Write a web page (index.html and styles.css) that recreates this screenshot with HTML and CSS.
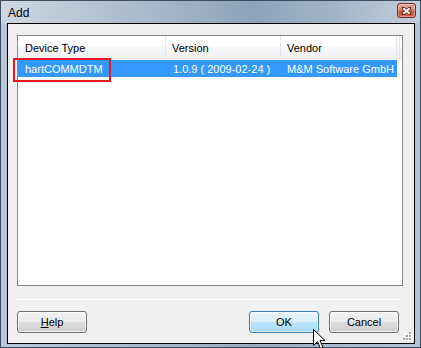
FILE: index.html
```html
<!DOCTYPE html>
<html>
<head>
<meta charset="utf-8">
<link rel="stylesheet" href="styles.css">
</head>
<body>
<div class="window">
  <div class="titlebar">
    <span class="title">Add</span>
    <span class="close">
      <svg width="9" height="8" viewBox="0 0 9 8"><path d="M1 1 L8 7 M8 1 L1 7" stroke="#5a1a10" stroke-width="3.2" stroke-linecap="square"/><path d="M1.3 1.2 L7.7 6.8 M7.7 1.2 L1.3 6.8" stroke="#fff" stroke-width="1.8"/></svg>
    </span>
  </div>
  <div class="client">
    <div class="listview">
      <div class="header">
        <div class="hcol c1">Device Type</div>
        <div class="hcol c2">Version</div>
        <div class="hcol c3">Vendor</div>
        <div class="hfill"></div>
      </div>
      <div class="row selected">
        <div class="cell c1">hartCOMMDTM</div>
        <div class="cell c2">1.0.9 ( 2009-02-24 )</div>
        <div class="cell c3">M&amp;M Software GmbH</div>
      </div>
      <div class="highlight"></div>
    </div>
    <div class="separator"></div>
    <div class="buttons">
      <button class="btn"><u>H</u>elp</button>
      <div class="spacer"></div>
      <button class="btn default">OK</button>
      <button class="btn">Cancel</button>
    </div>
    <svg class="grip" width="9" height="9" viewBox="0 0 9 9">
      <g fill="#fff"><rect x="7" y="1" width="2" height="2"/><rect x="4" y="4" width="2" height="2"/><rect x="7" y="4" width="2" height="2"/><rect x="1" y="7" width="2" height="2"/><rect x="4" y="7" width="2" height="2"/><rect x="7" y="7" width="2" height="2"/></g>
      <g fill="#a8a8a8"><rect x="6" y="0" width="2" height="2"/><rect x="3" y="3" width="2" height="2"/><rect x="6" y="3" width="2" height="2"/><rect x="0" y="6" width="2" height="2"/><rect x="3" y="6" width="2" height="2"/><rect x="6" y="6" width="2" height="2"/></g>
    </svg>
  </div>
  <svg class="cursor" width="13" height="21" viewBox="0 0 13 21">
    <path d="M0.5 0.5 L0.5 16.5 L4.5 12.5 L7.5 19.5 L10 18.5 L7 11.5 L12 11.5 Z" fill="#fff" stroke="#000" stroke-width="1" stroke-linejoin="miter"/>
  </svg>
</div>
</body>
</html>
```

FILE: styles.css
```css
* { box-sizing: border-box; }
html, body { margin: 0; padding: 0; }
body {
  width: 421px;
  height: 348px;
  overflow: hidden;
  font-family: "Liberation Sans", Arial, sans-serif;
  font-size: 11px;
  color: #000;
}
.window {
  position: relative;
  width: 421px;
  height: 348px;
  border: 1px solid #3b4d60;
  background: linear-gradient(to right, #b9c8d7 0%, #a4b6c9 40%, #98acc1 60%, #aabccd 85%, #b4c4d4 100%);
  padding: 0 5px 3px 6px;
  display: flex;
  flex-direction: column;
}
.titlebar {
  height: 22px;
  display: flex;
  align-items: center;
  justify-content: space-between;
  background: linear-gradient(to right, #cdd8e3 0%, #bccad8 15%, #a3b5c7 40%, #8ea3b9 60%, #a2b5c8 80%, #c2cfdc 100%);
  margin: 0 -5px 0 -6px;
  padding: 0 4px 0 7px;
}
.title {
  font-size: 12px;
  color: #000;
  padding-top: 1px;
}
.close {
  width: 19px;
  height: 15px;
  margin-top: -3px;
  border: 1px solid #6e2a1c;
  border-radius: 3px;
  background: linear-gradient(to bottom, #e9a99a 0%, #d98070 45%, #c5503a 55%, #cf6a4e 100%);
  display: flex;
  align-items: center;
  justify-content: center;
  box-shadow: inset 0 0 0 1px rgba(255,255,255,0.35);
}
.client {
  position: relative;
  flex: 1;
  border: 1px solid #000;
  background: #f0f0f0;
  padding: 11px 11px 9px 9px;
  display: flex;
  flex-direction: column;
}
.listview {
  position: relative;
  height: 251px;
  border: 1px solid #828790;
  background: #fff;
}
.header {
  display: flex;
  height: 23px;
  background: linear-gradient(to bottom, #ffffff 0%, #ffffff 45%, #f5f6f7 55%, #f1f2f4 100%);
  border-bottom: 1px solid #e5e5e5;
}
.hcol {
  display: flex;
  align-items: center;
  border-right: 1px solid #e3e5e8;
  padding-top: 2px;
}
.hfill {
  flex: 1;
  border-right: 1px solid #e3e5e8;
  margin-right: 2px;
  background: linear-gradient(to bottom, #ffffff, #eef0f2);
}
.c1 { width: 148px; padding-left: 7px; }
.c2 { width: 115px; padding-left: 6px; }
.c3 { width: 116px; padding-left: 6px; }
.row {
  display: flex;
  height: 17px;
  margin-top: 1px;
  width: 379px;
}
.row.selected {
  background: #3399ff;
  color: #fff;
}
.cell {
  display: flex;
  align-items: center;
  white-space: nowrap;
}
.cell.c2 { padding-left: 7px; }
.cell.c3 { padding-left: 6px; }
.highlight {
  position: absolute;
  left: -5px;
  top: 22px;
  width: 98px;
  height: 24px;
  border: 2px solid #e8191f;
}
.separator {
  margin-top: 13px;
  height: 1px;
  background: #a0a0a0;
  border-bottom: 1px solid #ffffff;
  margin-right: 1px;
}
.buttons {
  display: flex;
  margin-top: 11px;
  margin-right: 4px;
  gap: 10px;
}
.spacer { flex: 1; }
.btn {
  width: 70px;
  height: 22px;
  border: 1px solid #707070;
  border-radius: 3px;
  background: linear-gradient(to bottom, #f2f2f2 0%, #ebebeb 50%, #dddddd 50%, #cfcfcf 100%);
  box-shadow: inset 0 0 0 1px rgba(255,255,255,0.7);
  font-family: "Liberation Sans", Arial, sans-serif;
  font-size: 11px;
  color: #000;
  padding: 0;
  margin: 0;
}
.btn u { text-decoration: underline; }
.btn.default {
  border-color: #3c7fb1;
  background: linear-gradient(to bottom, #eaf6fd 0%, #d9f0fc 50%, #bee6fd 50%, #a7d9f5 100%);
  box-shadow: inset 0 0 0 1px rgba(255,255,255,0.6);
}
.grip {
  position: absolute;
  right: 2px;
  bottom: 2px;
}
.cursor {
  position: absolute;
  left: 312px;
  top: 328px;
}
```
